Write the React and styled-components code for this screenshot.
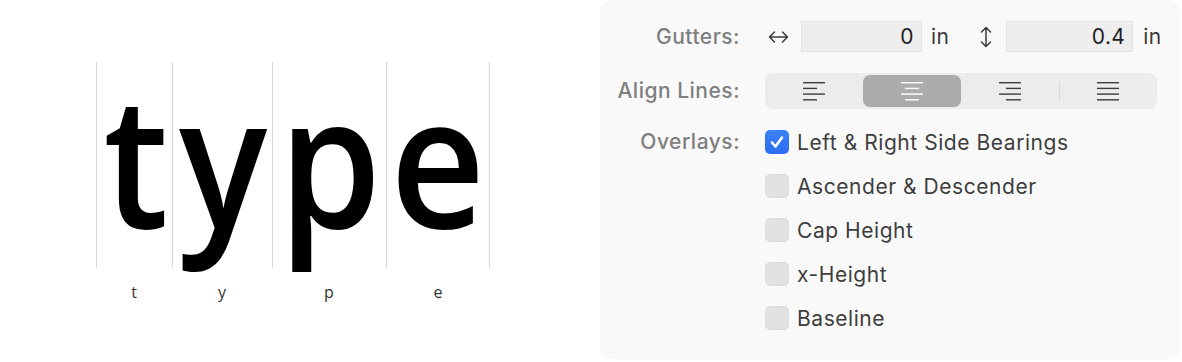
import React from "react";
import styled, { createGlobalStyle } from "styled-components";

const Global = createGlobalStyle`
  html, body { margin: 0; padding: 0; background: #ffffff; }
  body { font-family: Inter, "Noto Sans", sans-serif; }
`;

const Page = styled.div`
  width: 1182px;
  height: 362px;
  display: flex;
  background: #ffffff;
  overflow: hidden;
`;

const Preview = styled.div`
  width: 600px;
  flex: none;
  box-sizing: border-box;
  padding: 62px 0 0 96px;
`;

const GlyphRow = styled.div`
  display: flex;
`;

const GlyphColumn = styled.div`
  width: ${(p) => p.$w}px;
  flex: none;
  display: flex;
  flex-direction: column;
  align-items: stretch;
`;

const GlyphCell = styled.div`
  height: 206px;
  box-sizing: border-box;
  border-left: 1.5px solid #d6d6d6;
  border-right: ${(p) => (p.$last ? "1.5px solid #d6d6d6" : "none")};
  display: flex;
  justify-content: center;
  overflow: visible;
`;

const Glyph = styled.span`
  font-family: "Open Sans", "Noto Sans", sans-serif;
  font-size: 183px;
  font-weight: 600;
  line-height: 190px;
  color: #000;
  white-space: nowrap;
  display: block;
  height: 190px;
  transform: scaleX(0.9);
  margin-left: ${(p) => p.$dx || 0}px;
`;

const GlyphLabel = styled.div`
  font-family: "Open Sans", "Noto Sans", sans-serif;
  font-size: 16px;
  line-height: 20px;
  color: #333;
  text-align: center;
  margin-top: 14px;
`;

const Panel = styled.div`
  width: 580px;
  height: 359px;
  flex: none;
  box-sizing: border-box;
  background: #f9f9f9;
  border-radius: 12px;
  padding-top: 21px;
  display: flex;
  flex-direction: column;
  gap: 21px;
`;

const FormRow = styled.div`
  display: flex;
  align-items: ${(p) => (p.$top ? "flex-start" : "center")};
  height: ${(p) => (p.$h ? `${p.$h}px` : "auto")};
`;

const FieldLabel = styled.div`
  width: 140px;
  flex: none;
  text-align: right;
  font-size: 21px;
  font-weight: 500;
  line-height: 24px;
  color: #7f7f7f;
  margin-right: 25px;
  letter-spacing: 0.5px;
  white-space: nowrap;
`;

const Controls = styled.div`
  display: flex;
  align-items: center;
`;

const IconSlot = styled.span`
  display: inline-flex;
  align-items: center;
  justify-content: center;
  width: ${(p) => p.$w}px;
  margin: 0 ${(p) => p.$mr}px 0 ${(p) => p.$ml}px;
  color: #3a3a3a;
`;

const NumberField = styled.div`
  width: ${(p) => p.$w}px;
  height: 31px;
  box-sizing: border-box;
  background: #eeeeee;
  border: 1px solid #e3e3e3;
  font-size: 21px;
  line-height: 29px;
  color: #1e1e1e;
  text-align: right;
  padding-right: 7px;
  letter-spacing: 0.4px;
`;

const Unit = styled.span`
  font-size: 21px;
  color: #3a3a3a;
  margin-left: ${(p) => p.$ml}px;
  letter-spacing: 0.4px;
`;

const Segmented = styled.div`
  width: 392px;
  height: 36px;
  box-sizing: border-box;
  background: #ececec;
  border-radius: 8px;
  display: flex;
  align-items: center;
`;

const Segment = styled.div`
  width: 98px;
  height: 32px;
  display: flex;
  align-items: center;
  justify-content: center;
  border-radius: 7px;
  background: ${(p) => (p.$active ? "#ababab" : "transparent")};
  color: ${(p) => (p.$active ? "#ffffff" : "#3c3c3c")};
  position: relative;
`;

const Divider = styled.span`
  position: absolute;
  left: 0;
  top: 7px;
  width: 1px;
  height: 19px;
  background: #d8d8d8;
`;

const CheckList = styled.div`
  display: flex;
  flex-direction: column;
  gap: 20px;
`;

const CheckItem = styled.label`
  display: flex;
  align-items: center;
  height: 24px;
  font-size: 21px;
  color: #3e3e3e;
  letter-spacing: 0.55px;
  white-space: nowrap;
`;

const Box = styled.span`
  width: 24px;
  height: 24px;
  box-sizing: border-box;
  border-radius: 5px;
  margin-right: 8px;
  flex: none;
  display: inline-flex;
  align-items: center;
  justify-content: center;
  background: ${(p) => (p.$checked ? "linear-gradient(#3b82f8, #2c6cf3)" : "#e2e2e2")};
  border: ${(p) => (p.$checked ? "none" : "1px solid #dddddd")};
`;

const HArrow = () => (
  <svg width="21" height="14" viewBox="0 0 21 14" fill="none" stroke="currentColor" strokeWidth="1.5" strokeLinecap="round" strokeLinejoin="round">
    <path d="M1.5 7H19.5M6.5 2L1.5 7L6.5 12M14.5 2L19.5 7L14.5 12" />
  </svg>
);

const VArrow = () => (
  <svg width="12" height="22" viewBox="0 0 12 22" fill="none" stroke="currentColor" strokeWidth="1.5" strokeLinecap="round" strokeLinejoin="round">
    <path d="M6 1.5V20.5M1.5 6L6 1.5L10.5 6M1.5 16L6 20.5L10.5 16" />
  </svg>
);

const AlignIcon = ({ kind }) => {
  const full = [0, 22];
  const short =
    kind === "left" ? [0, 14] : kind === "center" ? [4, 18] : kind === "right" ? [7, 22] : [0, 22];
  const rows = [full, short, full, short];
  return (
    <svg width="22" height="20" viewBox="0 0 22 20">
      {rows.map(([a, b], i) => (
        <rect key={i} x={a} y={1 + i * 5.7} width={b - a} height="1.4" fill="currentColor" />
      ))}
    </svg>
  );
};

const Check = () => (
  <svg width="16" height="16" viewBox="0 0 16 16" fill="none" stroke="#ffffff" strokeWidth="2.6" strokeLinecap="round" strokeLinejoin="round">
    <path d="M3 8.5L6.5 12.5L13 3.5" />
  </svg>
);

const glyphs = [
  { ch: "t", w: 76, dx: 4 },
  { ch: "y", w: 100, dx: 0 },
  { ch: "p", w: 114, dx: 0 },
  { ch: "e", w: 104, dx: 0 },
];

const overlays = [
  { label: "Left & Right Side Bearings", checked: true },
  { label: "Ascender & Descender" },
  { label: "Cap Height" },
  { label: "x-Height" },
  { label: "Baseline" },
];

export default function App() {
  return (
    <>
      <Global />
      <Page>
        <Preview>
          <GlyphRow>
            {glyphs.map((g, i) => (
              <GlyphColumn key={g.ch} $w={g.w}>
                <GlyphCell $last={i === glyphs.length - 1}>
                  <Glyph $dx={g.dx}>{g.ch}</Glyph>
                </GlyphCell>
                <GlyphLabel>{g.ch}</GlyphLabel>
              </GlyphColumn>
            ))}
          </GlyphRow>
        </Preview>
        <Panel>
          <FormRow $h={31}>
            <FieldLabel>Gutters:</FieldLabel>
            <Controls>
              <IconSlot $w={21} $ml={3} $mr={12}>
                <HArrow />
              </IconSlot>
              <NumberField $w={121}>0</NumberField>
              <Unit $ml={9}>in</Unit>
              <IconSlot $w={12} $ml={31} $mr={14}>
                <VArrow />
              </IconSlot>
              <NumberField $w={127}>0.4</NumberField>
              <Unit $ml={10}>in</Unit>
            </Controls>
          </FormRow>
          <FormRow $h={36}>
            <FieldLabel>Align Lines:</FieldLabel>
            <Segmented>
              <Segment>
                <AlignIcon kind="left" />
              </Segment>
              <Segment $active>
                <AlignIcon kind="center" />
              </Segment>
              <Segment>
                <AlignIcon kind="right" />
              </Segment>
              <Segment>
                <Divider />
                <AlignIcon kind="justify" />
              </Segment>
            </Segmented>
          </FormRow>
          <FormRow $top>
            <FieldLabel>Overlays:</FieldLabel>
            <CheckList>
              {overlays.map((o) => (
                <CheckItem key={o.label}>
                  <Box $checked={o.checked}>{o.checked && <Check />}</Box>
                  {o.label}
                </CheckItem>
              ))}
            </CheckList>
          </FormRow>
        </Panel>
      </Page>
    </>
  );
}
